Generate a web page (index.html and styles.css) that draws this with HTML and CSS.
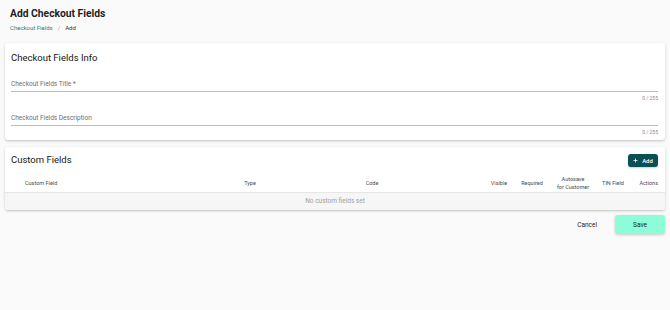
FILE: index.html
```html
<!DOCTYPE html>
<html>
<head>
<meta charset="utf-8">
<link rel="stylesheet" href="styles.css">
</head>
<body>
<div class="page">
  <header class="page-head">
    <h1 class="page-title">Add Checkout Fields</h1>
    <nav class="crumbs">
      <a class="crumb-link">Checkout Fields</a>
      <span class="crumb-sep">/</span>
      <span class="crumb-current">Add</span>
    </nav>
  </header>

  <section class="card info-card">
    <h2 class="card-title">Checkout Fields Info</h2>
    <div class="field field-first">
      <div class="field-label">Checkout Fields Title *</div>
      <div class="field-line"></div>
      <div class="field-hint">0 / 255</div>
    </div>
    <div class="field">
      <div class="field-label">Checkout Fields Description</div>
      <div class="field-line"></div>
      <div class="field-hint">0 / 255</div>
    </div>
  </section>

  <section class="card custom-card">
    <div class="custom-head">
      <h2 class="card-title">Custom Fields</h2>
      <button class="add-btn"><svg class="plus" viewBox="0 0 10 10" width="5" height="5"><path d="M5 1v8M1 5h8" stroke="#fff" stroke-width="1.6" fill="none"/></svg>Add</button>
    </div>
    <div class="table-head">
      <div class="th th-left">Custom Field</div>
      <div class="th">Type</div>
      <div class="th">Code</div>
      <div class="th"></div>
      <div class="th">Visible</div>
      <div class="th">Required</div>
      <div class="th">Autosave<br>for Customer</div>
      <div class="th">TIN Field</div>
      <div class="th th-right">Actions</div>
    </div>
    <div class="empty-row">No custom fields set</div>
  </section>

  <div class="actions">
    <button class="cancel-btn">Cancel</button>
    <button class="save-btn">Save</button>
  </div>
</div>
</body>
</html>
```

FILE: styles.css
```css
* { box-sizing: border-box; }
html, body { margin: 0; padding: 0; }
body {
  background: #fafafa;
  font-family: Roboto, "Liberation Sans", Arial, sans-serif;
  color: #212121;
  width: 670px;
  height: 310px;
  overflow: hidden;
}
.page {
  padding: 6px 5px 0 5px;
  display: flex;
  flex-direction: column;
}
.page-head {
  padding: 0 5px;
  height: 37px;
}
.page-title {
  margin: 0;
  padding-top: 1px;
  font-size: 10.3px;
  font-weight: 700;
  line-height: 14px;
  color: #1e1e1e;
}
.crumbs {
  margin-top: 2px;
  display: flex;
  gap: 5px;
  font-size: 6px;
  line-height: 9px;
}
.crumb-link { color: #2a8083; }
.crumb-sep { color: #9e9e9e; }
.crumb-current { color: #333; }

.card {
  background: #fff;
  border-radius: 3px;
  box-shadow: 0 1px 3px rgba(0,0,0,0.18), 0 1px 1px rgba(0,0,0,0.06);
}
.info-card {
  padding: 9px 7px 9px 6px;
  height: 97px;
}
.card-title {
  margin: 0;
  font-size: 9.5px;
  font-weight: 400;
  line-height: 12px;
  color: #161616;
}
.field {
  margin-top: 13px;
}
.field-first { margin-top: 16px; }
.field-label {
  font-size: 6.5px;
  line-height: 8px;
  color: #6f6f6f;
}
.field-line {
  margin-top: 3px;
  height: 1px;
  background: #bdbdbd;
}
.field-hint {
  margin-top: 3px;
  text-align: right;
  font-size: 5px;
  line-height: 6px;
  color: #8a8a8a;
}

.custom-card {
  margin-top: 7px;
  height: 63px;
  overflow: hidden;
}
.custom-head {
  display: flex;
  justify-content: space-between;
  align-items: center;
  padding: 6px 7px 0 6px;
  height: 20px;
}
.add-btn {
  border: none;
  background: #0c4f52;
  color: #fff;
  font-family: inherit;
  font-size: 6px;
  font-weight: 500;
  width: 30px;
  height: 13px;
  border-radius: 3px;
  padding: 0;
  display: flex;
  align-items: center;
  justify-content: center;
  gap: 4px;
  box-shadow: 0 1px 2px rgba(0,0,0,0.2);
}
.plus { display: block; }
.table-head {
  display: grid;
  grid-template-columns: 185px 120px 124px 48px 34px 32px 50px 30px 30px;
  padding-right: 7px;
  padding-top: 6px;
  height: 26px;
  align-items: center;
  border-bottom: 1px solid #e6e6e6;
  font-size: 5.5px;
  line-height: 8px;
  color: #4a4a4a;
  font-weight: 400;
}
.th { text-align: center; }
.th-left { text-align: left; padding-left: 20px; }
.th-right { text-align: right; }
.empty-row {
  background: #f6f6f6;
  height: 17px;
  line-height: 17px;
  text-align: center;
  font-size: 6.5px;
  color: #a0a0a0;
}

.actions {
  display: flex;
  justify-content: flex-end;
  align-items: center;
  gap: 18px;
  margin-top: 5px;
}
.cancel-btn {
  border: none;
  background: transparent;
  font-family: inherit;
  font-size: 6.5px;
  font-weight: 400;
  color: #222;
  padding: 0;
}
.save-btn {
  border: none;
  background: #8cfcd9;
  font-family: inherit;
  font-size: 6.5px;
  font-weight: 400;
  color: #102a27;
  width: 50px;
  height: 19px;
  border-radius: 3px;
  padding: 0;
  box-shadow: 0 1px 3px rgba(0,0,0,0.2);
}
```
